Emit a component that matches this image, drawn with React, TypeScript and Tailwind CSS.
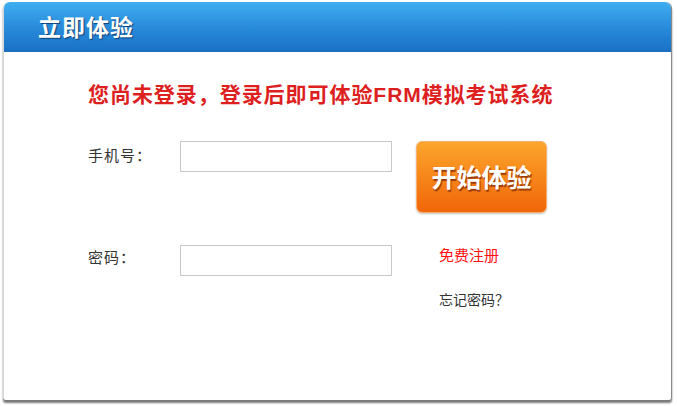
export default function App() {
  return (
    <div className="w-[677px] h-[406px] bg-white pt-[2px] pl-[3px] font-['Microsoft_YaHei','Noto_Sans_CJK_SC',sans-serif]">
      <div className="w-[669px] h-[398px] flex flex-col rounded-t-[6px] rounded-b-[3px] border-l border-[#d8d8d8] border-r border-r-[#8a8a8a] bg-white shadow-[0_3px_2px_#7a7a7a]">
        {/* Header */}
        <div className="h-[50px] shrink-0 flex items-center pl-[34px] rounded-t-[6px] bg-gradient-to-b from-[#40aef0] via-[#2a8ddc] to-[#1a72c6] border-b-2 border-[#1d6fc0]">
          <h2 className="text-white text-[23px] font-bold tracking-[1px] [text-shadow:1px_1px_1px_#0b3d78]">立即体验</h2>
        </div>

        {/* Body */}
        <div className="flex-1 pl-[84px] pt-[27px]">
          <p className="text-[#dd1f1f] text-[21px] font-bold leading-[28px] tracking-[0.95px]">
            您尚未登录，登录后即可体验<span className="font-['Liberation_Sans',sans-serif]">FRM</span>模拟考试系统
          </p>

          <div className="flex mt-[32px]">
            <div className="flex flex-col">
              <div className="flex items-center h-[31px]">
                <span className="w-[92px] text-[15px] text-[#333] -mt-[2px] tracking-[1px]">手机号：</span>
                <input className="w-[212px] h-[31px] border border-[#c8c8c8] outline-none" />
              </div>
              <div className="flex items-center h-[31px] mt-[73px]">
                <span className="w-[92px] text-[15px] text-[#333] -mt-[6px] tracking-[1px]">密码：</span>
                <input type="password" className="w-[212px] h-[31px] border border-[#c8c8c8] outline-none" />
              </div>
            </div>

            <div className="flex flex-col ml-[24px]">
              <button className="w-[131px] h-[72px] rounded-[6px] border border-[#f8b070] bg-gradient-to-b from-[#fba52c] via-[#f7861a] to-[#f06508] shadow-[0_1px_2px_rgba(0,0,0,0.25)] text-white text-[25px] font-bold [text-shadow:1px_2px_1px_#9a3a06]">
                开始体验
              </button>
              <a className="ml-[23px] mt-[32px] text-[15px] text-[#ff1010] leading-[20px]">免费注册</a>
              <a className="ml-[23px] mt-[24px] text-[14px] text-[#333] leading-[20px]">忘记密码？</a>
            </div>
          </div>
        </div>
      </div>
    </div>
  );
}
